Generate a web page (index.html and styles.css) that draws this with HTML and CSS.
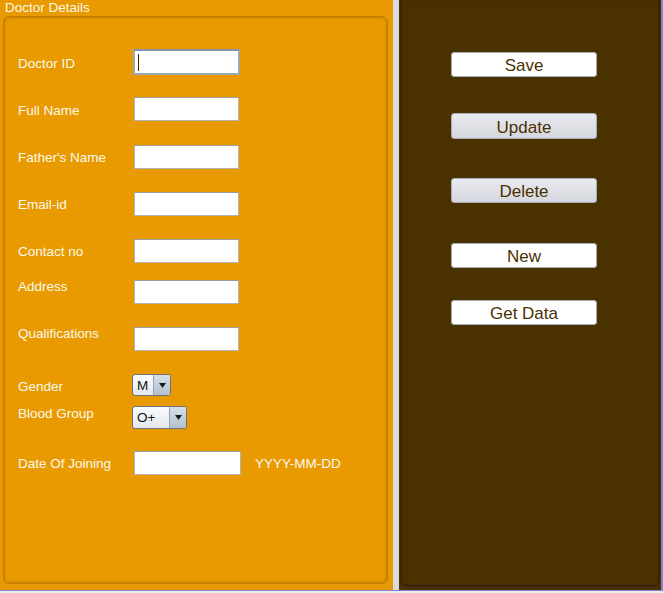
FILE: index.html
```html
<!DOCTYPE html>
<html>
<head>
<meta charset="utf-8">
<link rel="stylesheet" href="styles.css">
</head>
<body>
<div class="window">
  <section class="left">
    <div class="title">Doctor Details</div>
    <div class="box">
      <form class="form">
        <div class="row r1"><label class="lbl">Doctor ID</label><div class="field focus"><span class="caret"></span></div></div>
        <div class="row r2"><label class="lbl">Full Name</label><div class="field"></div></div>
        <div class="row r3"><label class="lbl">Father's Name</label><div class="field"></div></div>
        <div class="row r4"><label class="lbl">Email-id</label><div class="field"></div></div>
        <div class="row r5"><label class="lbl">Contact no</label><div class="field"></div></div>
        <div class="row r6"><label class="lbl up">Address</label><div class="field down"></div></div>
        <div class="row r7"><label class="lbl up">Qualifications</label><div class="field down"></div></div>
        <div class="row r8"><label class="lbl">Gender</label>
          <div class="combo gender"><span class="cval">M</span><span class="carrow"><svg width="7" height="5" viewBox="0 0 7 5"><path d="M0 0H7L3.5 5Z" fill="#1a1a1a"/></svg></span></div>
        </div>
        <div class="row r9"><label class="lbl up">Blood Group</label>
          <div class="combo blood"><span class="cval">O+</span><span class="carrow"><svg width="7" height="5" viewBox="0 0 7 5"><path d="M0 0H7L3.5 5Z" fill="#1a1a1a"/></svg></span></div>
        </div>
        <div class="row r10"><label class="lbl">Date Of Joining</label><div class="field wide"></div><span class="hint">YYYY-MM-DD</span></div>
      </form>
    </div>
  </section>
  <div class="sep"></div>
  <section class="right">
    <div class="rbox">
      <button class="btn white b1" type="button">Save</button>
      <button class="btn grey b2" type="button">Update</button>
      <button class="btn grey b3" type="button">Delete</button>
      <button class="btn white b4" type="button">New</button>
      <button class="btn white b5" type="button">Get Data</button>
    </div>
  </section>
  <div class="edge"></div>
</div>
<div class="bottom"></div>
</body>
</html>
```

FILE: styles.css
```css
* { box-sizing: border-box; }
html, body { margin: 0; padding: 0; }
body {
  width: 663px;
  height: 593px;
  background: #ececf0;
  font-family: "Liberation Sans", Arial, sans-serif;
  overflow: hidden;
}
.window {
  display: flex;
  height: 591px;
  border-bottom: 1px solid #8c7fd2;
}
.bottom { height: 2px; background: #ececf0; }
.left {
  width: 393px;
  background: #e89a00;
  display: flex;
  flex-direction: column;
}
.title {
  height: 16px;
  line-height: 16px;
  padding-left: 5px;
  color: #fdf8ec;
  font-size: 13.5px;
}
.box {
  margin: 0 5px 6px 3px;
  flex: 1;
  border: 1px solid #c07f00;
  border-radius: 6px;
  box-shadow: inset 1px 1px 2px rgba(140, 80, 0, 0.35), inset -1px -1px 2px rgba(140, 80, 0, 0.3);
}
.form {
  padding: 32px 0 0 14px;
  margin: 0;
}
.row {
  display: flex;
  align-items: flex-start;
}
.r2 { margin-top: 22px; }
.r3 { margin-top: 24px; }
.r4 { margin-top: 23px; }
.r5 { margin-top: 23px; }
.r6 { margin-top: 15px; }
.r7 { margin-top: 21px; }
.r8 { margin-top: 23px; }
.r9 { margin-top: 9px; }
.r10 { margin-top: 22px; }
.lbl {
  width: 116px;
  flex: none;
  line-height: 16px;
  font-size: 13.5px;
  color: #fdf8ec;
  margin-top: 5px;
}
.r1 .lbl { margin-top: 7px; }
.r2 .lbl { margin-top: 6px; }
.lbl.up { margin-top: 1px; }
.field {
  width: 105px;
  height: 24px;
  background: #fff;
  border: 1px solid #b4b4b4;
  border-top-color: #9c9c9c;
}
.field.down { margin-top: 2px; }
.field.wide { width: 107px; }
.field.focus {
  width: 107px;
  height: 26px;
  margin-left: -1px;
  border: 2px solid #9aa8b6;
  border-top-color: #8594a4;
  position: relative;
}
.caret {
  position: absolute;
  left: 3px;
  top: 3px;
  width: 1px;
  height: 17px;
  background: #3a2600;
}
.hint {
  margin: 5px 0 0 14px;
  line-height: 16px;
  font-size: 13.5px;
  color: #fdf8ec;
}
.combo {
  display: flex;
  margin-left: -2px;
  border: 1px solid #6f7278;
  border-radius: 3px;
  overflow: hidden;
  background: linear-gradient(#fafbfc, #e4e7ec);
}
.combo.gender { width: 39px; height: 22px; }
.combo.blood { width: 55px; height: 23px; margin-top: 1px; }
.cval {
  flex: 1;
  padding-left: 4px;
  font-size: 13.5px;
  line-height: 21px;
  color: #111;
}
.carrow {
  width: 17px;
  display: flex;
  align-items: center;
  justify-content: center;
  border-left: 1px solid #9aa4b0;
  background: linear-gradient(#d6e0ea, #b2c0ce);
}
.sep {
  width: 6px;
  background: #d9d9e1;
}
.right {
  width: 262px;
  background: #4a3200;
  padding: 0 1px 3px 1px;
  display: flex;
}
.rbox {
  flex: 1;
  border: 1px solid #3a2700;
  border-top: none;
  border-radius: 0 0 6px 6px;
  box-shadow: inset 1px 0 2px rgba(0, 0, 0, 0.25), inset -1px -1px 2px rgba(0, 0, 0, 0.25);
  display: flex;
  flex-direction: column;
  align-items: flex-start;
  padding: 52px 0 0 50px;
}
.edge {
  width: 2px;
  background: #8c7fd2;
}
.btn {
  width: 146px;
  height: 25px;
  padding: 2px 0 0 0;
  border: 1px solid #a9acb6;
  border-radius: 3px;
  font-family: "Liberation Sans", Arial, sans-serif;
  font-size: 17px;
  line-height: 21px;
  color: #4a3000;
}
.btn.white { background: #fff; }
.btn.grey { background: linear-gradient(#e9eaef, #d5d7de); height: 26px; }
.b2 { margin-top: 36px; }
.b3 { margin-top: 39px; height: 25px !important; }
.b4 { margin-top: 40px; }
.b5 { margin-top: 32px; }
```
